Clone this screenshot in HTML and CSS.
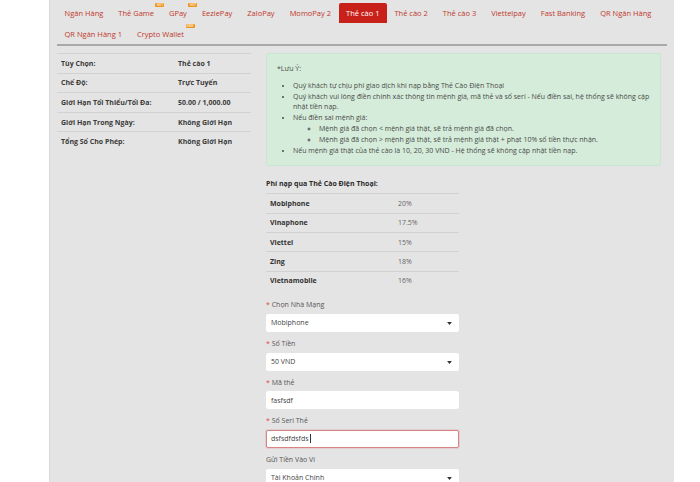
FILE: index.html
```html
<!DOCTYPE html>
<html lang="vi">
<head>
<meta charset="utf-8">
<link rel="stylesheet" href="styles.css">
</head>
<body>
<div class="panel">
  <nav class="tabs">
    <a class="tab">Ngân Hàng</a>
    <a class="tab">Thẻ Game<span class="badge">HOT</span></a>
    <a class="tab">GPay<span class="badge">HOT</span></a>
    <a class="tab">EeziePay</a>
    <a class="tab">ZaloPay</a>
    <a class="tab">MomoPay 2</a>
    <a class="tab active">Thẻ cào 1</a>
    <a class="tab">Thẻ cào 2</a>
    <a class="tab">Thẻ cào 3</a>
    <a class="tab">Viettelpay</a>
    <a class="tab">Fast Banking</a>
    <a class="tab">QR Ngân Hàng</a>
    <a class="tab">QR Ngân Hàng 1</a>
    <a class="tab">Crypto Wallet<span class="badge">NEW</span></a>
  </nav>
  <div class="content">
    <aside class="info">
      <table class="info-table">
        <tr><td>Tùy Chọn:</td><td>Thẻ cào 1</td></tr>
        <tr><td>Chế Độ:</td><td>Trực Tuyến</td></tr>
        <tr><td>Giới Hạn Tối Thiểu/Tối Đa:</td><td>50.00 / 1,000.00</td></tr>
        <tr><td>Giới Hạn Trong Ngày:</td><td>Không Giới Hạn</td></tr>
        <tr><td>Tổng Số Cho Phép:</td><td>Không Giới Hạn</td></tr>
      </table>
    </aside>
    <main class="main">
      <div class="notice">
        <p class="notice-title">*Lưu Ý:</p>
        <ul class="notice-list">
          <li>Quý khách tự chịu phí giao dịch khi nạp bằng Thẻ Cào Điện Thoại</li>
          <li>Quý khách vui lòng điền chính xác thông tin mệnh giá, mã thẻ và số seri - Nếu điền sai, hệ thống sẽ không cập nhật tiền nạp.</li>
          <li>Nếu điền sai mệnh giá:
            <ul class="sub-list">
              <li>Mệnh giá đã chọn &lt; mệnh giá thật, sẽ trả mệnh giá đã chọn.</li>
              <li>Mệnh giá đã chọn &gt; mệnh giá thật, sẽ trả mệnh giá thật + phạt 10% số tiền thực nhận.</li>
            </ul>
          </li>
          <li>Nếu mệnh giá thật của thẻ cào là 10, 20, 30 VND - Hệ thống sẽ không cập nhật tiền nạp.</li>
        </ul>
      </div>
      <h4 class="fee-title">Phí nạp qua Thẻ Cào Điện Thoại:</h4>
      <table class="fee-table">
        <tr><td>Mobiphone</td><td>20%</td></tr>
        <tr><td>Vinaphone</td><td>17.5%</td></tr>
        <tr><td>Viettel</td><td>15%</td></tr>
        <tr><td>Zing</td><td>18%</td></tr>
        <tr><td>Vietnamobile</td><td>16%</td></tr>
      </table>
      <div class="form">
        <div class="field">
          <div class="label"><span class="req">*</span> Chọn Nhà Mạng</div>
          <div class="control select">Mobiphone<svg class="caret" viewBox="0 0 8 5" width="5" height="3"><path d="M0 0h8L4 5z" fill="#333"/></svg></div>
        </div>
        <div class="field">
          <div class="label"><span class="req">*</span> Số Tiền</div>
          <div class="control select">50 VND<svg class="caret" viewBox="0 0 8 5" width="5" height="3"><path d="M0 0h8L4 5z" fill="#333"/></svg></div>
        </div>
        <div class="field">
          <div class="label"><span class="req">*</span> Mã thẻ</div>
          <div class="control">fasfsdf</div>
        </div>
        <div class="field">
          <div class="label"><span class="req">*</span> Số Seri Thẻ</div>
          <div class="control error">dsfsdfdsfds<span class="cursor"></span></div>
        </div>
        <div class="field">
          <div class="label">Gửi Tiền Vào Ví</div>
          <div class="control select">Tài Khoản Chính<svg class="caret" viewBox="0 0 8 5" width="5" height="3"><path d="M0 0h8L4 5z" fill="#333"/></svg></div>
        </div>
      </div>
    </main>
  </div>
</div>
</body>
</html>
```
FILE: styles.css
```css
html, body {
  margin: 0;
  padding: 0;
  background: #ffffff;
  font-family: "Open Sans", "Liberation Sans", sans-serif;
  color: #333;
}
.panel {
  margin-left: 49px;
  width: 625px;
  min-height: 482px;
  background: #e4e4e4;
  border-left: 1px solid #dadada;
  box-sizing: border-box;
}
.tabs {
  display: flex;
  flex-wrap: wrap;
  row-gap: 1px;
  margin: 0 7px;
  padding: 3px 0 0 0;
  border-bottom: 2px solid #a9a9a9;
}
.tab {
  position: relative;
  display: block;
  height: 20px;
  line-height: 21px;
  padding: 0 7.5px;
  font-size: 7.5px;
  color: #c0392b;
  border-radius: 2px 2px 0 0;
}
.tab.active {
  background: #c8211a;
  color: #fff;
}
.badge {
  position: absolute;
  top: 0;
  right: -3px;
  width: 9px;
  height: 4px;
  line-height: 4px;
  border-radius: 1px;
  background: #f0931e;
  color: #fde7c4;
  font-size: 3px;
  font-weight: 700;
  text-align: center;
  overflow: hidden;
}
.content {
  display: flex;
  gap: 15px;
  padding: 7px 7px 0;
}
.info {
  width: 194px;
  flex: none;
}
.info-table {
  width: 100%;
  border-collapse: collapse;
  font-size: 7px;
  font-weight: 700;
  color: #3a3a3a;
}
.info-table td {
  height: 18.6px;
  padding: 0 4px;
  border-top: 1px solid #d2d2d2;
}
.info-table td:first-child {
  width: 109px;
}
.main {
  width: 395px;
  flex: none;
}
.notice {
  background: #d4ecd9;
  border: 1px solid #cbe6d0;
  border-radius: 2px;
  padding: 10px 10px 9px;
  font-size: 7px;
  line-height: 10.8px;
  color: #4a4a4a;
}
.notice-title {
  margin: 0 0 6px;
}
.notice-list {
  margin: 0;
  padding-left: 16px;
}
.sub-list {
  margin: 0;
  padding-left: 26px;
  list-style: circle;
}
.fee-title {
  margin: 13px 0 5px;
  font-size: 7px;
  font-weight: 700;
  color: #2b2b2b;
}
.fee-table {
  width: 193px;
  border-collapse: collapse;
  font-size: 7px;
}
.fee-table td {
  height: 18.3px;
  padding: 0 4px;
  border-top: 1px solid #d2d2d2;
}
.fee-table td:first-child {
  width: 120px;
  font-weight: 700;
  color: #333;
}
.fee-table td:last-child {
  color: #666;
}
.form {
  margin-top: 9.5px;
  width: 193px;
}
.field {
  margin-bottom: 6.2px;
}
.label {
  height: 11px;
  line-height: 11px;
  margin-bottom: 3.5px;
  font-size: 7px;
  color: #555;
}
.req {
  color: #e0443c;
}
.control {
  position: relative;
  display: flex;
  align-items: center;
  height: 18px;
  padding: 0 4px;
  background: #fff;
  border: 1px solid #fff;
  border-radius: 2px;
  box-sizing: border-box;
  font-size: 7px;
  color: #444;
}
.control.error {
  border-color: #d98484;
  box-shadow: 0 0 0 1px rgba(217, 83, 79, 0.15);
}
.cursor {
  display: inline-block;
  width: 1px;
  height: 9px;
  margin-left: 1px;
  background: #333;
}
.caret {
  position: absolute;
  right: 6px;
  top: 7px;
}
```
